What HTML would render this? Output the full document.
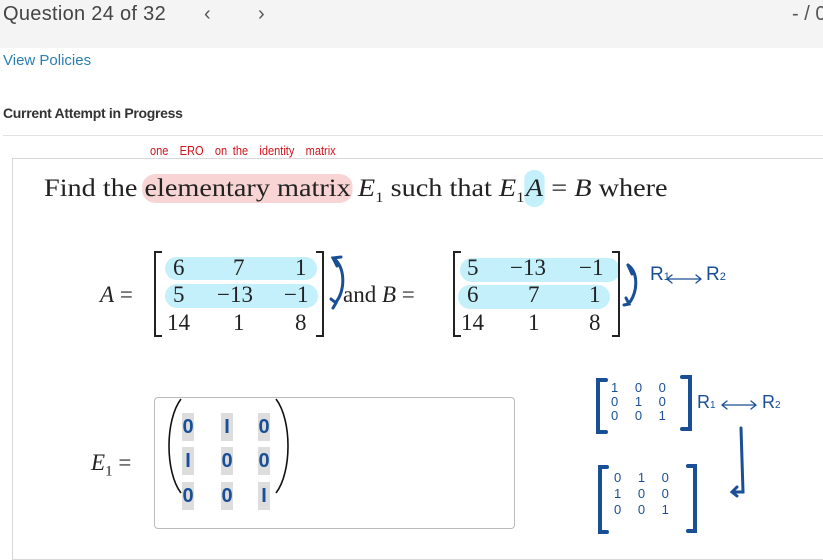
<!DOCTYPE html>
<html><head><style>
body{margin:0;width:823px;height:549px;overflow:hidden;background:#fff;position:relative;font-family:"Liberation Sans",sans-serif;}
.a{position:absolute;white-space:nowrap;}
.m{font-family:"Liberation Serif",serif;font-size:23px;color:#222;}
.hl{position:absolute;background:#c4f0fb;border-radius:12px;}
.hw{font-family:"Liberation Sans",sans-serif;color:#1a4f96;}
.g{position:absolute;width:12px;background:#ddd;color:#1a4f96;font-weight:bold;font-size:20px;text-align:center;line-height:28px;height:28px;}
</style></head><body>
<div class="a" style="left:0;top:0;width:823px;height:48px;background:#f4f4f4"></div>
<div class="a" style="left:3px;top:3px;font-size:20px;color:#444;letter-spacing:0.3px">Question 24 of 32</div>
<div class="a" style="left:204px;top:3px;font-size:20px;color:#555">&lsaquo;</div>
<div class="a" style="left:258px;top:3px;font-size:20px;color:#555">&rsaquo;</div>
<div class="a" style="left:792px;top:3px;font-size:20px;color:#555">- / 0</div>
<div class="a" style="left:3px;top:52px;font-size:15px;color:#2a7fb0">View Policies</div>
<div class="a" style="left:3px;top:105px;font-size:14px;font-weight:bold;color:#333;letter-spacing:-0.3px">Current Attempt in Progress</div>
<div class="a" style="left:3px;top:135px;width:820px;height:1px;background:#e2e2e2"></div>
<div class="a" style="left:12px;top:158px;width:820px;height:400px;border:1px solid #d8d8d8"></div>
<div class="a" style="left:150px;top:143px;font-size:13px;color:#d0141c;transform:scaleX(0.85);transform-origin:left;word-spacing:3px">one&nbsp; ERO&nbsp; on the&nbsp; identity&nbsp; matrix</div>
<div class="a" style="left:44px;top:175px;font-family:'Liberation Serif',serif;font-size:25px;color:#222;transform:scaleX(1.13);transform-origin:left">Find the <span style="background:#f9d4d4;border-radius:12px;padding:1px 2px;margin:0 -2px">elementary matrix</span> <i>E</i><sub style="font-size:15px">1</sub> such that <i>E</i><sub style="font-size:15px">1</sub><i style="background:#c4f0fb;border-radius:10px;padding:5px 1px">A</i> = <i>B</i> where</div>

<div class="hl" style="left:165px;top:257px;width:152px;height:23px"></div>
<div class="hl" style="left:165px;top:284px;width:153px;height:24px"></div>
<div class="hl" style="left:460px;top:258px;width:160px;height:24px"></div>
<div class="hl" style="left:458px;top:285px;width:152px;height:24px"></div>

<div class="a m" style="left:100px;top:282px"><i>A</i> =</div>
<svg class="a" style="left:0;top:0" width="823" height="549">
<g fill="none" stroke="#222" stroke-width="2">
<path d="M162 252H155V336H162"/><path d="M316 252H323V336H316"/>
<path d="M461 252H454V336H461"/><path d="M612 252H619V336H612"/>
</g>
<g fill="none" stroke="#1a4f96" stroke-width="3" stroke-linecap="round">
<path d="M333 258C345 265 346 290 336 302"/><path d="M337 266L333 258L341 257"/><path d="M331 299L336 303L333 308"/>
<path d="M628 265C638 272 638 290 630 302"/><path d="M632 274L628 265"/><path d="M626 298L629 304L624 305"/>
<path d="M667 279H701M672 275L667 279L672 283M696 275L701 279L696 283" stroke-width="1.3"/>
<path d="M606 380H598V432H606M682 377H690V429H682" stroke-width="4"/>
<path d="M607 467H600V532H607M688 466H695V531H688" stroke-width="4"/>
<path d="M722 405H756M727 401L722 405L727 409M751 401L756 405L751 409" stroke-width="1.3"/>
<path d="M741 428L743 492L733 492M737 487L732 492L737 496" stroke-width="3"/>
</g>
<g fill="none" stroke="#111" stroke-width="1.6">
<path d="M181 399C165 420 165 472 181 493"/><path d="M276 399C292 420 292 472 276 493"/>
</g>
</svg>
<div class="a m" style="left:173px;top:255px">6</div><div class="a m" style="left:233px;top:255px">7</div><div class="a m" style="left:295px;top:255px">1</div>
<div class="a m" style="left:173px;top:282px">5</div><div class="a m" style="left:217px;top:282px">&minus;13</div><div class="a m" style="left:284px;top:282px">&minus;1</div>
<div class="a m" style="left:167px;top:310px">14</div><div class="a m" style="left:233px;top:310px">1</div><div class="a m" style="left:295px;top:310px">8</div>
<div class="a m" style="left:343px;top:282px">and <i>B</i> =</div>
<div class="a m" style="left:467px;top:255px">5</div><div class="a m" style="left:510px;top:255px">&minus;13</div><div class="a m" style="left:579px;top:255px">&minus;1</div>
<div class="a m" style="left:467px;top:282px">6</div><div class="a m" style="left:528px;top:282px">7</div><div class="a m" style="left:589px;top:282px">1</div>
<div class="a m" style="left:461px;top:310px">14</div><div class="a m" style="left:528px;top:310px">1</div><div class="a m" style="left:589px;top:310px">8</div>
<div class="a hw" style="left:650px;top:264px;font-size:19px">R<span style="font-size:11px">1</span></div>
<div class="a hw" style="left:706px;top:264px;font-size:19px">R<span style="font-size:11px">2</span></div>

<div class="a m" style="left:91px;top:450px"><i>E</i><sub style="font-size:15px">1</sub> =</div>
<div class="a" style="left:154px;top:397px;width:359px;height:130px;border:1px solid #bbb;border-radius:4px"></div>
<div class="g" style="left:182px;top:413px">0</div><div class="g" style="left:221px;top:413px">I</div><div class="g" style="left:258px;top:413px">0</div>
<div class="g" style="left:182px;top:447px">I</div><div class="g" style="left:221px;top:447px">0</div><div class="g" style="left:258px;top:447px">0</div>
<div class="g" style="left:182px;top:482px">0</div><div class="g" style="left:221px;top:482px">0</div><div class="g" style="left:258px;top:482px">I</div>
<div class="a hw" style="left:611px;top:381px;font-size:13px;line-height:14px;word-spacing:13px">1 0 0<br>0 1 0<br>0 0 1</div>
<div class="a hw" style="left:697px;top:392px;font-size:18px">R<span style="font-size:10px">1</span></div>
<div class="a hw" style="left:762px;top:392px;font-size:18px">R<span style="font-size:10px">2</span></div>
<div class="a hw" style="left:614px;top:470px;font-size:13px;line-height:16px;word-spacing:13px">0 1 0<br>1 0 0<br>0 0 1</div>
</body></html>
